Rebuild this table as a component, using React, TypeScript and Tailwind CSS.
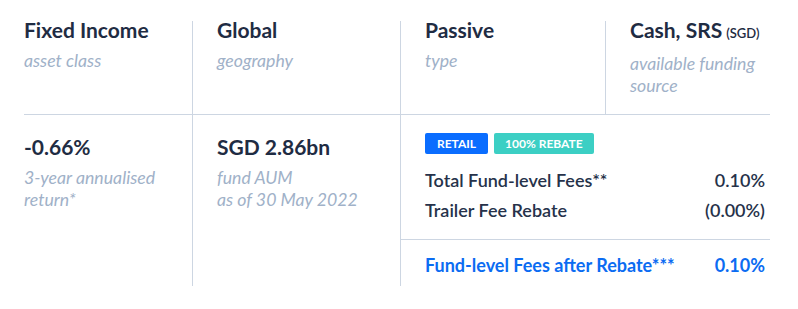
import React from 'react';

const Cell = ({ title, sub, extra, className = '' }: {
  title: string;
  sub: string[];
  extra?: string;
  className?: string;
}) => (
  <div className={className}>
    <div className="text-[21px] leading-[18px] font-bold text-[#1f2c43] whitespace-nowrap">
      {title}
      {extra && <span className="ml-1 text-[13px] font-semibold">{extra}</span>}
    </div>
    <div className="mt-[11px] text-[17.7px] leading-[22px] italic font-normal text-[#a0b1c8]">
      {sub.map((s, i) => (
        <div key={i}>{s}</div>
      ))}
    </div>
  </div>
);

const FeeRow = ({ label, value, highlight = false }: {
  label: string;
  value: string;
  highlight?: boolean;
}) => (
  <div
    className={`flex justify-between text-[18px] leading-[30px] ${
      highlight ? 'font-bold text-[#0b6cf2]' : 'font-semibold text-[#26324a]'
    }`}
  >
    <span>{label}</span>
    <span>{value}</span>
  </div>
);

export default function App() {
  return (
    <div className="w-full h-[309px] bg-white pl-6 pt-[21px]" style={{ fontFamily: 'Lato, "Noto Sans", sans-serif' }}>
      <div className="w-[746px]">
        <div className="flex h-[94px] border-b border-[#cdd6e2]">
          <Cell className="w-[169px] border-r border-[#cdd6e2]" title="Fixed Income" sub={['asset class']} />
          <Cell className="w-[208px] pl-6 border-r border-[#cdd6e2]" title="Global" sub={['geography']} />
          <Cell className="w-[205px] pl-6 border-r border-[#cdd6e2]" title="Passive" sub={['type']} />
          <Cell className="flex-1 pl-6" title="Cash, SRS" extra="(SGD)" sub={['available funding', 'source']} />
        </div>
        <div className="flex h-[171px]">
          <Cell
            className="w-[169px] pt-[23px] border-r border-[#cdd6e2]"
            title="-0.66%"
            sub={['3-year annualised', 'return*']}
          />
          <Cell
            className="w-[208px] pl-6 pt-[23px] border-r border-[#cdd6e2]"
            title="SGD 2.86bn"
            sub={['fund AUM', 'as of 30 May 2022']}
          />
          <div className="flex-1">
            <div className="pl-6 pr-[5px] pt-[18px] pb-[14px] border-b border-[#cdd6e2]">
              <div className="flex gap-[6px]">
                <span className="h-[21px] px-3 flex items-center rounded-[2px] bg-[#0a6dff] text-white text-[12px] font-bold">
                  RETAIL
                </span>
                <span className="h-[21px] px-[11px] flex items-center rounded-[2px] bg-[#3ccfc4] text-white text-[12px] font-bold">
                  100% REBATE
                </span>
              </div>
              <div className="mt-[11px]">
                <FeeRow label="Total Fund-level Fees**" value="0.10%" />
                <FeeRow label="Trailer Fee Rebate" value="(0.00%)" />
              </div>
            </div>
            <div className="pl-6 pr-[5px] pt-[10px]">
              <FeeRow label="Fund-level Fees after Rebate***" value="0.10%" highlight />
            </div>
          </div>
        </div>
      </div>
    </div>
  );
}
